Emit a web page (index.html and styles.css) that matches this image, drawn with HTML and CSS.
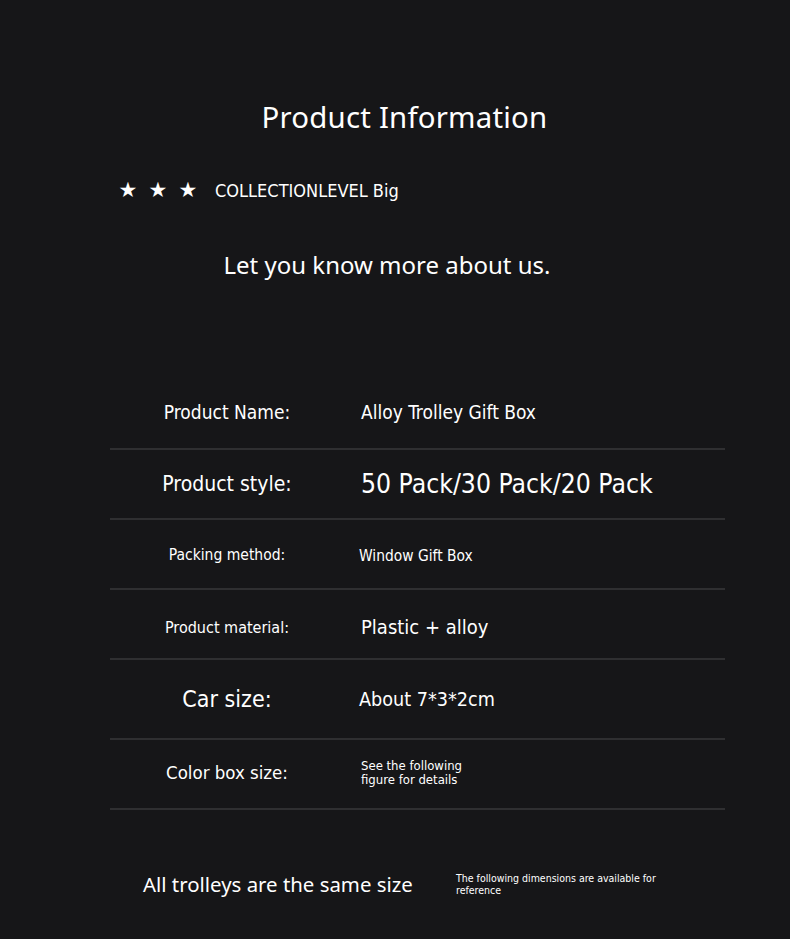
FILE: index.html
```html
<!DOCTYPE html>
<html lang="en">
<head>
<meta charset="utf-8">
<title>Product Information</title>
<link rel="stylesheet" href="styles.css">
</head>
<body>
<main class="page">
  <h1 class="title">Product Information</h1>
  <div class="level">
    <span class="stars"><span>★</span><span>★</span><span>★</span></span>
    <span class="level-text">COLLECTIONLEVEL Big</span>
  </div>
  <p class="intro">Let you know more about us.</p>

  <section class="table">
    <div class="row r1"><div class="label">Product Name:</div><div class="value">Alloy Trolley Gift Box</div></div>
    <div class="row r2"><div class="label">Product style:</div><div class="value">50 Pack/30 Pack/20 Pack</div></div>
    <div class="row r3"><div class="label">Packing method:</div><div class="value">Window Gift Box</div></div>
    <div class="row r4"><div class="label">Product material:</div><div class="value">Plastic + alloy</div></div>
    <div class="row r5"><div class="label">Car size:</div><div class="value">About 7*3*2cm</div></div>
    <div class="row r6"><div class="label">Color box size:</div><div class="value">See the following<br>figure for details</div></div>
  </section>

  <div class="footer">
    <div class="same">All trolleys are the same size</div>
    <div class="note">The following dimensions are available for<br>reference</div>
  </div>
</main>
</body>
</html>
```
FILE: styles.css
```css
* { box-sizing: border-box; margin: 0; padding: 0; }
html, body { background: #161618; }
body { width: 790px; height: 939px; overflow: hidden; color: #fff; font-family: "Noto Sans", "Open Sans", sans-serif; }
.page { display: flex; flex-direction: column; }
.title { font-weight: 400; font-size: 29.4px; line-height: 40px; text-align: center; padding-top: 97px; padding-left: 19px; letter-spacing: 0.2px; }
.level { display: flex; align-items: center; padding-left: 117px; margin-top: 39px; height: 28px; }
.stars { display: flex; gap: 8px; font-family: "DejaVu Sans", sans-serif; font-size: 21px; }
.stars span { width: 22px; text-align: center; }
.level-text { margin-left: 16px; font-size: 18px; font-family: "DejaVu Sans Condensed", "Noto Sans", sans-serif; }
.intro { text-align: center; font-size: 24px; line-height: 32px; margin-top: 45px; padding-right: 16px; }
.table { margin: 95px 65px 0 110px; display: flex; flex-direction: column; font-family: "DejaVu Sans Condensed", "Noto Sans", sans-serif; }
.row { display: flex; align-items: center; border-bottom: 2px solid #2f2f31; height: 70px; }
.row.r1 { height: 74px; }
.row.r5 { height: 80px; }
.label { width: 234px; text-align: center; }
.value { padding-left: 17px; }
.r1 .label { font-size: 19px; }
.r1 .value { font-size: 19px; }
.r2 .label { font-size: 21px; }
.r2 .value { font-size: 26.3px; }
.r3 .label { font-size: 15.5px; padding-top: 2px; }
.r3 .value { font-size: 15.4px; padding-left: 15px; padding-top: 4px; }
.r4 .label { font-size: 16px; padding-top: 6px; }
.r4 .value { font-size: 20px; padding-top: 6px; }
.r5 .label { font-size: 23px; }
.r5 .value { font-size: 19.6px; padding-left: 15px; }
.r6 .label { font-size: 18.5px; padding-bottom: 4px; }
.r6 .value { font-size: 13px; line-height: 14px; padding-bottom: 2px; }
.footer { display: flex; align-items: center; margin-top: 60px; padding-left: 143px; }
.same { font-size: 20.4px; width: 313px; }
.note { font-size: 10.5px; line-height: 12px; font-family: "DejaVu Sans Condensed", sans-serif; }
```
